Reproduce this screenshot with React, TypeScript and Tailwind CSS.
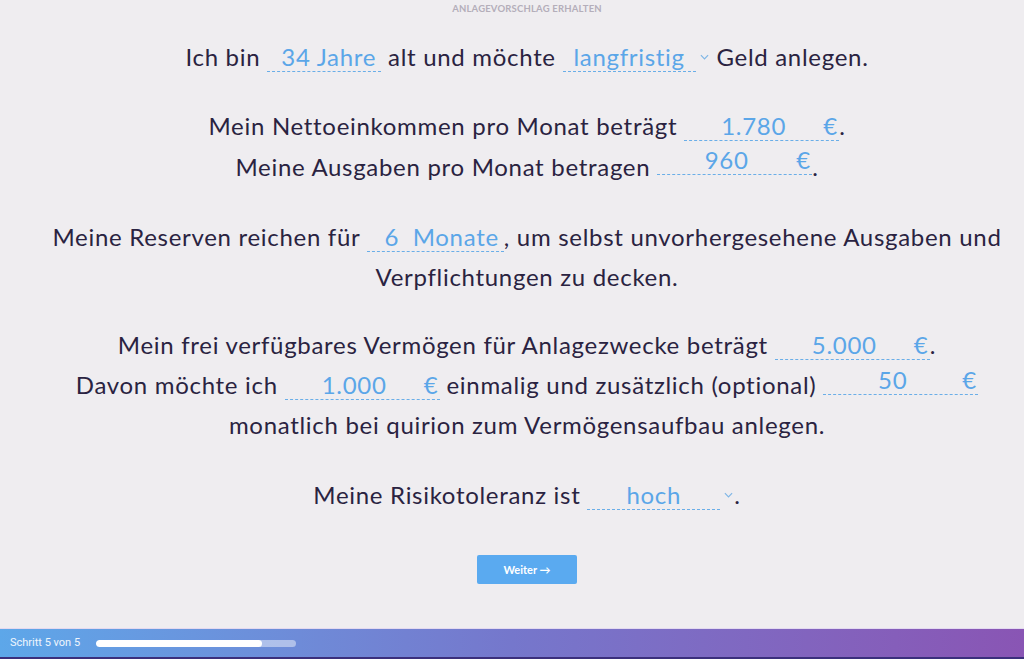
import React from "react";

const blue = "text-[#5ba6e8]";

function Field({ children, width = "w-[114px]", raise = "" }: { children: React.ReactNode; width?: string; raise?: string }) {
  return (
    <span
      className={`inline-block ${width} ${raise} border-b border-dashed border-[#6aaee8] leading-[28px] ${blue} text-right pr-[5px]`}
    >
      {children}
    </span>
  );
}

function EuroField({ value, raise = "" }: { value: string; raise?: string }) {
  return (
    <span
      className={`inline-flex w-[155px] ${raise} border-b border-dashed border-[#6aaee8] leading-[28px] ${blue}`}
    >
      <span className="w-[139px] text-center">{value}</span>
      <span>€</span>
    </span>
  );
}

function Chevron() {
  return (
    <svg viewBox="0 0 10 6" className="inline-block w-[9px] h-[6px] ml-[4px] mr-[1px] align-[6px]">
      <path d="M1 1l4 4 4-4" fill="none" stroke="#7fb6e6" strokeWidth="1.3" />
    </svg>
  );
}

function Select({ value }: { value: string }) {
  return (
    <>
      <span className={`inline-block w-[133px] border-b border-dashed border-[#6aaee8] leading-[28px] ${blue} text-center`}>
        {value}
      </span>
      <Chevron />
    </>
  );
}

export default function App() {
  return (
    <div
      className="h-[659px] w-full flex flex-col bg-[#efedf0] text-[#2a2341] overflow-hidden"
      style={{ fontFamily: "Lato, 'Open Sans', sans-serif" }}
    >
      <div className="text-center pt-[2px] text-[9.5px] font-bold tracking-[0.02em] text-[#b4aeba] pl-[30px]">
        ANLAGEVORSCHLAG ERHALTEN
      </div>

      <main className="flex-1 pl-[30px] pt-[21px] text-center text-[24px] leading-[40px] tracking-[0.7px]">
        <p>
          Ich bin <Field>34 Jahre</Field> alt und möchte <Select value="langfristig" /> Geld anlegen.
        </p>

        <p className="mt-[29px]">
          Mein Nettoeinkommen pro Monat beträgt <EuroField value="1.780" />.
          <br />
          Meine Ausgaben pro Monat betragen <EuroField value="960" raise="align-[7px]" />.
        </p>

        <p className="mt-[30px]">
          Meine Reserven reichen für <Field width="w-[137px]">6&nbsp;&nbsp;Monate</Field>, um selbst unvorhergesehene Ausgaben und
          <br />
          Verpflichtungen zu decken.
        </p>

        <p className="mt-[28px]">
          Mein frei verfügbares Vermögen für Anlagezwecke beträgt <EuroField value="5.000" />.
          <br />
          Davon möchte ich <EuroField value="1.000" /> einmalig und zusätzlich (optional) <EuroField value="50" raise="align-[5px]" />
          <br />
          monatlich bei quirion zum Vermögensaufbau anlegen.
        </p>

        <p className="mt-[30px]">
          Meine Risikotoleranz ist <Select value="hoch" />.
        </p>

        <div className="mt-[40px] flex justify-center">
          <button className="w-[100px] h-[29px] rounded-[2px] bg-[#5aaaf0] text-white text-[11px] font-bold leading-none tracking-normal">
            Weiter →
          </button>
        </div>
      </main>

      <footer className="h-[31px] border-t border-[#e3d9f0] border-b-2 border-b-[#3b2f7c] bg-gradient-to-r from-[#5da7e9] via-[#7577cc] to-[#8955b4] flex items-center px-[10px] gap-[16px]">
        <span className="text-[11px] text-white/90" style={{ fontFamily: "Roboto, sans-serif" }}>
          Schritt 5 von 5
        </span>
        <div className="w-[200px] h-[7px] rounded-full bg-white/45 overflow-hidden">
          <div className="h-full w-[166px] bg-white rounded-full" />
        </div>
      </footer>
    </div>
  );
}
